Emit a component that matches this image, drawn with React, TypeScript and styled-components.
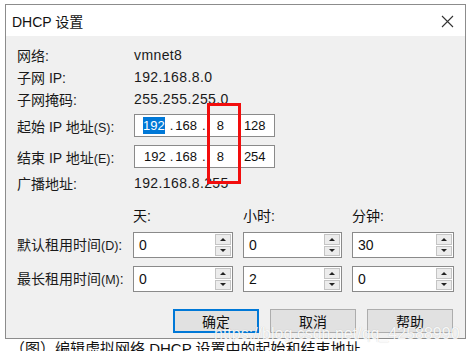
import React from "react";
import styled, { createGlobalStyle } from "styled-components";

const GlobalStyle = createGlobalStyle`
  html, body {
    margin: 0;
    padding: 0;
    background: #ffffff;
  }
  body {
    font-family: "Liberation Sans", "Noto Sans CJK SC", sans-serif;
    color: #111;
  }
`;

const Page = styled.div`
  width: 468px;
  height: 351px;
  overflow: hidden;
  padding: 4px 0 0 5px;
  box-sizing: border-box;
  background: #fff;
`;

const Dialog = styled.div`
  position: relative;
  width: 461px;
  height: 335px;
  box-sizing: border-box;
  border: 1px solid #8c8c8c;
  background: #f0f0f0;
  display: flex;
  flex-direction: column;
`;

const TitleBar = styled.div`
  height: 31px;
  background: #fff;
  display: flex;
  align-items: center;
  justify-content: space-between;
  padding: 0 11px 0 6px;
  font-size: 14px;
  color: #111;
`;

const CloseIcon = styled.svg`
  width: 13px;
  height: 13px;
  margin-top: 1px;
`;

const Body = styled.div`
  flex: 1;
  padding: 8px 0 0 11px;
  font-size: 14px;
`;

const InfoRow = styled.div<{ $h?: number; $mt?: number }>`
  display: flex;
  align-items: center;
  height: ${({ $h }) => $h ?? 22}px;
  margin-top: ${({ $mt }) => $mt ?? 0}px;
`;

const Label = styled.div`
  width: 117px;
  flex-shrink: 0;
  white-space: nowrap;
  color: #1a1a1a;
`;

const Paren = styled.span`
  font-size: 12.5px;
`;

const Value = styled.div`
  color: #1a1a1a;
  letter-spacing: 0.4px;
`;

const IpBox = styled.div`
  width: 141px;
  height: 23px;
  box-sizing: border-box;
  border: 1px solid #8a8a8a;
  background: #fff;
  display: flex;
  align-items: center;
  padding-left: 8px;
  font-size: 13px;
  white-space: nowrap;
`;

const Seg = styled.span<{ $ml?: number; $sel?: boolean }>`
  margin-left: ${({ $ml }) => $ml ?? 0}px;
  line-height: 17px;
  background: ${({ $sel }) => ($sel ? "#0078d7" : "transparent")};
  color: ${({ $sel }) => ($sel ? "#fff" : "#111")};
`;

const LeaseGrid = styled.div`
  margin-top: 12px;
  display: grid;
  grid-template-columns: 106px 100px 99px 102px;
  column-gap: 10px;
  align-items: center;
`;

const HeadCell = styled.div`
  height: 20px;
  line-height: 20px;
  margin-bottom: 6px;
`;

const LeaseLabel = styled.div`
  white-space: nowrap;
  color: #1a1a1a;
  height: 26px;
  line-height: 26px;
  margin-bottom: 8px;
`;

const SpinBox = styled.div`
  height: 26px;
  box-sizing: border-box;
  border: 1px solid #8a8a8a;
  background: #fff;
  display: flex;
  align-items: stretch;
  margin-bottom: 8px;
`;

const SpinText = styled.div`
  flex: 1;
  padding-left: 5px;
  display: flex;
  align-items: center;
  font-size: 14px;
`;

const SpinButtons = styled.div`
  width: 16px;
  display: flex;
  flex-direction: column;
  gap: 1px;
  padding: 1px 1px 1px 0;
`;

const SpinBtn = styled.div`
  flex: 1;
  background: #ececec;
  border: 1px solid #c4c4c4;
  display: flex;
  align-items: center;
  justify-content: center;
`;

const Tri = styled.div<{ $down?: boolean }>`
  width: 0;
  height: 0;
  border-left: 3px solid transparent;
  border-right: 3px solid transparent;
  ${({ $down }) =>
    $down ? "border-top: 3px solid #222;" : "border-bottom: 3px solid #222;"}
`;

const ButtonRow = styled.div`
  margin-top: 9px;
  display: flex;
  justify-content: flex-end;
  gap: 11px;
  padding-right: 12px;
`;

const Button = styled.div<{ $primary?: boolean }>`
  width: 86px;
  height: 24px;
  box-sizing: border-box;
  background: #e1e1e1;
  border: ${({ $primary }) => ($primary ? "2px solid #0078d7" : "1px solid #adadad")};
  display: flex;
  align-items: center;
  justify-content: center;
  font-size: 14px;
  color: #111;
`;

const Highlight = styled.div`
  position: absolute;
  left: 201px;
  top: 98px;
  width: 34px;
  height: 81px;
  box-sizing: border-box;
  border: 3px solid #f20d0d;
`;

const Watermark = styled.div`
  position: absolute;
  left: 208px;
  top: 320px;
  font-size: 16px;
  line-height: 18px;
  font-family: "Liberation Sans", sans-serif;
  color: rgba(255, 255, 255, 0.9);
  text-shadow: 0 0 1px rgba(0, 0, 0, 0.2);
  white-space: nowrap;
`;

const BottomStrip = styled.div`
  height: 12px;
  overflow: hidden;
  font-size: 15px;
  color: #111;
  white-space: nowrap;
  padding: 1px 0 0 5px;
`;

const BottomText = styled.div`
  line-height: 18px;
`;

const Spin = ({ value }: { value: string }) => (
  <SpinBox>
    <SpinText>{value}</SpinText>
    <SpinButtons>
      <SpinBtn>
        <Tri />
      </SpinBtn>
      <SpinBtn>
        <Tri $down />
      </SpinBtn>
    </SpinButtons>
  </SpinBox>
);

export default function App() {
  return (
    <>
      <GlobalStyle />
      <Page>
        <Dialog>
          <TitleBar>
            <span>DHCP 设置</span>
            <CloseIcon viewBox="0 0 13 13">
              <path d="M1 1 L12 12 M12 1 L1 12" stroke="#333" strokeWidth="1.1" />
            </CloseIcon>
          </TitleBar>
          <Body>
            <InfoRow>
              <Label>网络:</Label>
              <Value>vmnet8</Value>
            </InfoRow>
            <InfoRow>
              <Label>子网 IP:</Label>
              <Value>192.168.8.0</Value>
            </InfoRow>
            <InfoRow>
              <Label>子网掩码:</Label>
              <Value>255.255.255.0</Value>
            </InfoRow>
            <InfoRow $h={23} $mt={4}>
              <Label>
                起始 IP 地址<Paren>(S)</Paren>:
              </Label>
              <IpBox>
                <Seg $sel>192</Seg>
                <Seg $ml={5}>.</Seg>
                <Seg $ml={2}>168</Seg>
                <Seg $ml={5}>.</Seg>
                <Seg $ml={11}>8</Seg>
                <Seg $ml={20}>128</Seg>
              </IpBox>
            </InfoRow>
            <InfoRow $h={23} $mt={8}>
              <Label>
                结束 IP 地址<Paren>(E)</Paren>:
              </Label>
              <IpBox>
                <Seg $ml={1}>192</Seg>
                <Seg $ml={4}>.</Seg>
                <Seg $ml={2}>168</Seg>
                <Seg $ml={5}>.</Seg>
                <Seg $ml={11}>8</Seg>
                <Seg $ml={20}>254</Seg>
              </IpBox>
            </InfoRow>
            <InfoRow $mt={4}>
              <Label>广播地址:</Label>
              <Value>192.168.8.255</Value>
            </InfoRow>
            <LeaseGrid>
              <HeadCell />
              <HeadCell>天:</HeadCell>
              <HeadCell>小时:</HeadCell>
              <HeadCell>分钟:</HeadCell>
              <LeaseLabel>
                默认租用时间<Paren>(D)</Paren>:
              </LeaseLabel>
              <Spin value="0" />
              <Spin value="0" />
              <Spin value="30" />
              <LeaseLabel>
                最长租用时间<Paren>(M)</Paren>:
              </LeaseLabel>
              <Spin value="0" />
              <Spin value="2" />
              <Spin value="0" />
            </LeaseGrid>
            <ButtonRow>
              <Button $primary>确定</Button>
              <Button>取消</Button>
              <Button>帮助</Button>
            </ButtonRow>
          </Body>
          <Highlight />
          <Watermark>https://blog.csdn.net/qq_42588990</Watermark>
        </Dialog>
        <BottomStrip>
          <BottomText>（图）编辑虚拟网络 DHCP 设置中的起始和结束地址</BottomText>
        </BottomStrip>
      </Page>
    </>
  );
}
